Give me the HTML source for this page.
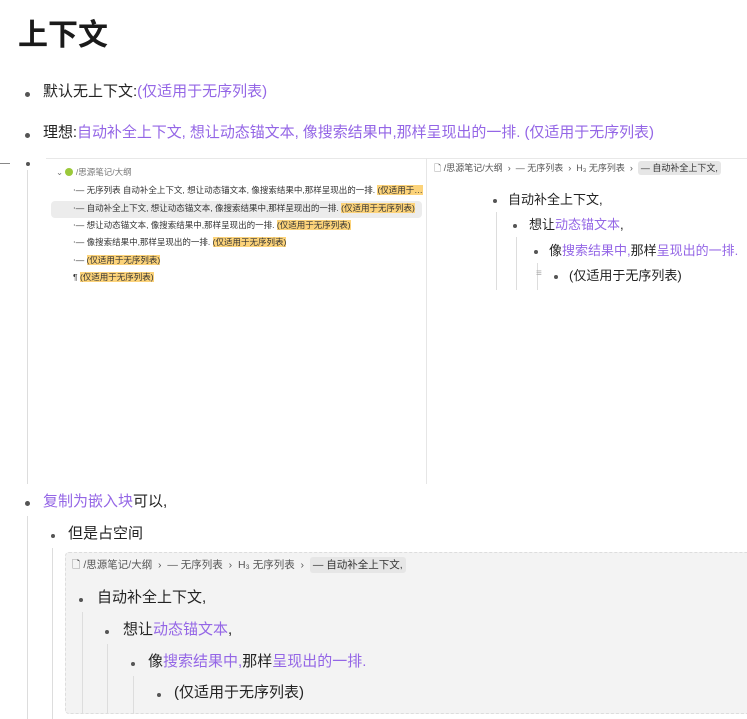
<!DOCTYPE html>
<html><head><meta charset="utf-8"><style>
*{margin:0;padding:0;box-sizing:border-box}
body{width:747px;height:719px;overflow:hidden;background:#fff;font-family:"Liberation Sans","Noto Sans CJK SC",sans-serif;color:#222;position:relative}
.a{position:absolute;white-space:nowrap;line-height:1}
.p{color:#9466e6}
.t15{font-size:15px}
.dot{position:absolute;width:5px;height:5px;border-radius:50%;background:#555}
.dot.s{width:4px;height:4px}
.vl{position:absolute;width:1px;background:#ddd}
.hl{background:#fcd37a;color:#333}
.o{font-size:8.5px;color:#333}
.bc{font-size:10px;color:#555}
.bc .cur{background:#e6e6e6;border-radius:3px;padding:2px 3px;color:#333}
</style></head><body>
<div class="a" style="left:18px;top:21px;font-size:30px;font-weight:bold;color:#1a1a1a">上下文</div>

<div class="dot" style="left:25px;top:92px"></div>
<div class="a t15" style="left:43px;top:84px">默认无上下文:<span class="p">(仅适用于无序列表)</span></div>
<div class="dot" style="left:25px;top:133px"></div>
<div class="a t15" style="left:43px;top:125px;letter-spacing:-0.05px">理想:<span class="p">自动补全上下文, 想让动态锚文本, 像搜索结果中,那样呈现出的一排. (仅适用于无序列表)</span></div>

<div class="a" style="left:0;top:163px;width:10px;height:1px;background:#888"></div>
<div class="dot s" style="left:26px;top:162px"></div>
<div class="vl" style="left:27px;top:170px;height:314px"></div>
<div class="a" style="left:46px;top:158px;width:701px;height:1px;background:#e8e8e8"></div>
<div class="vl" style="left:426px;top:158px;height:326px;background:#e6e6e6"></div>

<div class="a o" style="left:56px;top:168px;color:#777">⌄ <span style="display:inline-block;width:8px;height:8px;border-radius:50%;background:#9bc93a;vertical-align:-1px"></span> /思源笔记/大纲</div>
<div class="a" style="left:51px;top:201px;width:371px;height:17px;background:#ececec;border-radius:4px"></div>
<div class="a o" style="left:73px;top:186px">⋅— 无序列表 自动补全上下文, 想让动态锚文本, 像搜索结果中,那样呈现出的一排. <span class="hl">(仅适用于…</span></div>
<div class="a o" style="left:73px;top:204px">⋅— 自动补全上下文, 想让动态锚文本, 像搜索结果中,那样呈现出的一排. <span class="hl">(仅适用于无序列表)</span></div>
<div class="a o" style="left:73px;top:221px">⋅— 想让动态锚文本, 像搜索结果中,那样呈现出的一排. <span class="hl">(仅适用于无序列表)</span></div>
<div class="a o" style="left:73px;top:238px">⋅— 像搜索结果中,那样呈现出的一排. <span class="hl">(仅适用于无序列表)</span></div>
<div class="a o" style="left:73px;top:256px">⋅— <span class="hl">(仅适用于无序列表)</span></div>
<div class="a o" style="left:73px;top:273px">¶ <span class="hl">(仅适用于无序列表)</span></div>

<div class="a bc" style="left:434px;top:164px;font-size:9px">🗋 /思源笔记/大纲 &nbsp;›&nbsp; — 无序列表 &nbsp;›&nbsp; H₃ 无序列表 &nbsp;›&nbsp; <span class="cur">— 自动补全上下文,</span></div>
<div class="dot s" style="left:493px;top:199px"></div>
<div class="a" style="left:508px;top:193px;font-size:13px">自动补全上下文,</div>
<div class="vl" style="left:496px;top:212px;height:78px"></div>
<div class="dot s" style="left:513px;top:224px"></div>
<div class="a" style="left:529px;top:218px;font-size:13px">想让<span class="p">动态锚文本</span>,</div>
<div class="vl" style="left:516px;top:237px;height:53px"></div>
<div class="dot s" style="left:534px;top:250px"></div>
<div class="a" style="left:549px;top:244px;font-size:13px">像<span class="p">搜索结果中,</span>那样<span class="p">呈现出的一排.</span></div>
<div class="vl" style="left:537px;top:263px;height:27px"></div>
<div class="a" style="left:536px;top:269px;font-size:10px;color:#aaa">≡</div>
<div class="dot s" style="left:554px;top:275px"></div>
<div class="a" style="left:569px;top:269px;font-size:13px">(仅适用于无序列表)</div>

<div class="dot" style="left:25px;top:501px"></div>
<div class="a t15" style="left:43px;top:494px"><span class="p">复制为嵌入块</span>可以,</div>
<div class="vl" style="left:27px;top:516px;height:203px"></div>
<div class="dot s" style="left:51px;top:534px"></div>
<div class="a t15" style="left:68px;top:526px">但是占空间</div>
<div class="vl" style="left:52px;top:548px;height:171px"></div>

<div class="a" style="left:65px;top:552px;width:690px;height:162px;background:#f3f3f3;border:1px dashed #ddd;border-radius:4px"></div>
<div class="a bc" style="left:72px;top:560px;font-size:10.5px">🗋 /思源笔记/大纲 &nbsp;›&nbsp; — 无序列表 &nbsp;›&nbsp; H₃ 无序列表 &nbsp;›&nbsp; <span class="cur">— 自动补全上下文,</span></div>
<div class="dot s" style="left:79px;top:598px"></div>
<div class="a t15" style="left:97px;top:590px">自动补全上下文,</div>
<div class="vl" style="left:82px;top:612px;height:102px"></div>
<div class="dot s" style="left:105px;top:630px"></div>
<div class="a t15" style="left:123px;top:622px">想让<span class="p">动态锚文本</span>,</div>
<div class="vl" style="left:107px;top:644px;height:70px"></div>
<div class="dot s" style="left:131px;top:662px"></div>
<div class="a t15" style="left:148px;top:654px">像<span class="p">搜索结果中,</span>那样<span class="p">呈现出的一排.</span></div>
<div class="vl" style="left:133px;top:676px;height:38px"></div>
<div class="dot s" style="left:157px;top:693px"></div>
<div class="a t15" style="left:174px;top:685px">(仅适用于无序列表)</div>
</body></html>
